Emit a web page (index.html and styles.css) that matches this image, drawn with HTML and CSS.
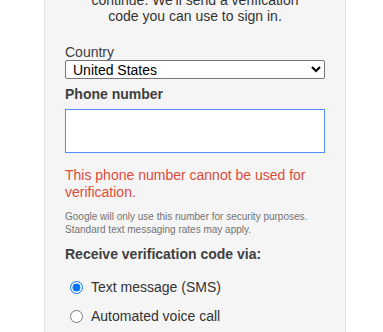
FILE: index.html
```html
<!DOCTYPE html>
<html>
<head>
<meta charset="utf-8">
<link rel="stylesheet" href="styles.css">
</head>
<body>
<div class="card">
  <p class="intro">continue. We'll send a verification code you can use to sign in.</p>
  <label class="label" for="country">Country</label>
  <select id="country" class="select"><option>United States</option></select>
  <label class="label bold phone-label" for="phone">Phone number</label>
  <input id="phone" class="phone" type="tel">
  <p class="error">This phone number cannot be used for verification.</p>
  <p class="note">Google will only use this number for security purposes. Standard text messaging rates may apply.</p>
  <p class="via">Receive verification code via:</p>
  <label class="radio-row"><input type="radio" name="m" checked class="radio"><span>Text message (SMS)</span></label>
  <label class="radio-row"><input type="radio" name="m" class="radio"><span>Automated voice call</span></label>
</div>
</body>
</html>
```
FILE: styles.css
```css
html, body { margin: 0; padding: 0; background: #fff; overflow: hidden; }
body { font-family: Arial, "Liberation Sans", sans-serif; font-size: 14px; color: #404040; }
.card {
  margin: -9px 0 0 44px;
  width: 302px;
  min-height: 360px;
  border: 1px solid #e5e5e5;
  background: #f5f5f5;
  padding: 0 20px;
  box-sizing: border-box;
}
.intro { margin: 0; text-align: center; line-height: 16px; color: #333; padding: 0 12px; }
.label { display: block; line-height: 16px; margin-top: 20px; }
.bold { font-weight: bold; }
.select {
  display: block; width: 260px; height: 19px; box-sizing: border-box; margin: 0;
  font-family: Arial, "Liberation Sans", sans-serif; font-size: 14px; color: #000;
  border: 1px solid #767676; border-radius: 2px; background: #fff; padding: 0 0 0 3px;
}
.phone-label { margin-top: 7px; line-height: 17px; margin-bottom: 6px; }
.phone {
  display: block; width: 260px; height: 44px; box-sizing: border-box; margin: 0;
  border: 1px solid #4d90fe; background: #fff; outline: none;
}
.error { margin: 14px 0 0; color: #dd4b39; line-height: 17px; }
.note { margin: 10px 0 0; font-size: 10px; line-height: 12.5px; color: #737373; }
.via { margin: 10px 0 0; font-weight: bold; line-height: 17px; }
.radio-row { display: flex; align-items: center; height: 29px; }
.via + .radio-row { margin-top: 10px; }
.radio { margin: 0 8px 0 5px; width: 13px; height: 13px; }
.radio-row span { line-height: 17px; color: #333; }
```
